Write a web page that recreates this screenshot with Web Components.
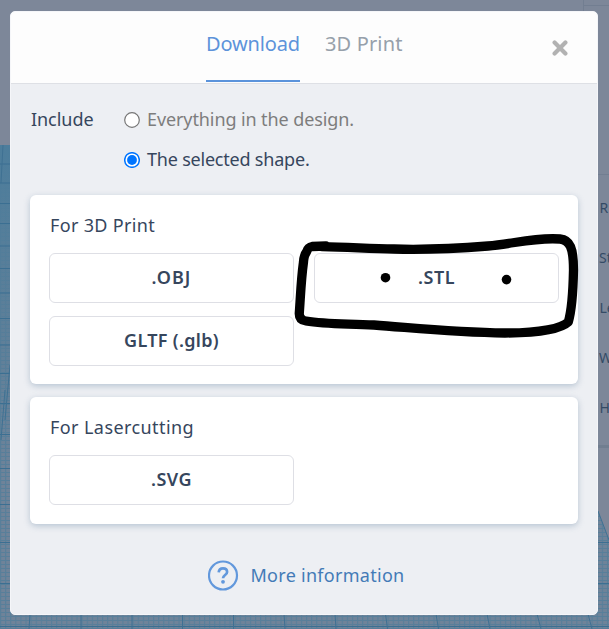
<!DOCTYPE html>
<html lang="en">
<head>
<meta charset="utf-8">
<title>Download</title>
<style>
html,body{margin:0;height:100%;overflow:hidden}
body{font-family:"Noto Sans","Open Sans",sans-serif;font-size:18px;color:#36465d;background:#7d8799}
</style>
</head>
<body>
<design-page></design-page>
<script>
const define = (name, html, setup) => customElements.define(name, class extends HTMLElement {
  connectedCallback() {
    if (this.shadowRoot) return;
    this.attachShadow({mode: 'open'}).innerHTML = html;
    if (setup) setup(this, this.shadowRoot);
  }
});

// A single line of text whose tracking fills the given width.
define('fit-text', `<style>:host{display:inline-block;white-space:nowrap;line-height:24px;padding-bottom:2px}span{display:inline-block}</style><span><slot></slot></span>`,
  (el, root) => {
    const s = root.querySelector('span'), w = +el.getAttribute('width'), n = el.textContent.length;
    s.style.letterSpacing = ((w - s.getBoundingClientRect().width) / n) + 'px';
  });

define('work-plane', `<style>:host{display:block;position:absolute;inset:0}svg{display:block}text{font:14px "Noto Sans",sans-serif;fill:#344b66}</style>
<svg width="609" height="629">
<defs>
<pattern id="fine" width="5.1" height="4" patternUnits="userSpaceOnUse"><rect width="5.1" height="4" fill="#6f8399"/><path d="M0 .5H5.1M.5 0V4" stroke="#587f9a" stroke-width="1.2"/></pattern>
<linearGradient id="far" x1="0" y1="145" x2="0" y2="480" gradientUnits="userSpaceOnUse"><stop stop-color="#4c7d9c"/><stop offset=".5" stop-color="#547d99" stop-opacity=".7"/><stop offset="1" stop-color="#547d99" stop-opacity="0"/></linearGradient>
</defs>
<rect width="609" height="629" fill="#7d8799"/>
<path d="M0 145H500L598 511L609 540V629H0Z" fill="url(#fine)"/>
<path d="M0 145H12V480H0Z" fill="url(#far)"/>
<path d="M0 164H12M0 183H12M0 203.5H12M0 223.5H12M0 246H12M0 268.5H12M0 293H12M0 318.5H12M0 345H12M0 373.5H12M0 403.5H12M0 434.500H12M0 468.500H12M0 504.500H12M0 542.500H12M0 583.500H12M597 542.500H609M597 583.500H609M0 626.500H609" stroke="#3b6f92" fill="none"/>
<path d="M10 365L5 420M5 390L1 440M3 145L1 183M30 614L29 629M81 614V629M132 614V629M182.500 614V629M233.500 614V629M284 614L285 629M335 614L336 629M385.500 614L387.500 629M436 614L438.500 629M487 614L490 629M537 614L541 629M588 614L592 629M598 511L609 540" stroke="#3f7193" fill="none"/>
<path d="M583.500 0V12M583 5.500H609M598 174.500H609" stroke="#727e91" fill="none"/>
<path d="M598 445H609V448H598Z" fill="#717e90"/>
<text x="599.500" y="213">R</text><text x="599" y="263">St</text><text x="599.500" y="313">Le</text><text x="599" y="363">W</text><text x="599.500" y="413">H</text>
</svg>`);

define('tab-item', `<style>:host{display:block;box-sizing:border-box;height:71px;padding-top:19px;font-size:20px;color:#96a0aa}
:host([active]){color:#5d93da;border-bottom:2px solid #5b93db}</style><slot></slot>`);

define('close-icon', `<style>:host{display:block;width:16px;height:16px}svg{display:block}</style>
<svg width="16" height="16"><path d="M2.600 2.600L13.400 13.400M13.400 2.600L2.600 13.400" stroke="#b2b2b2" stroke-width="4.200" stroke-linecap="round"/></svg>`);

define('dialog-head', `<style>:host{display:grid;grid-template-columns:195px 1fr 45.500px;box-sizing:border-box;height:72px;background:#fdfdfd;border-bottom:1px solid #dee0e5}
nav{display:flex;gap:25px;margin-top:-1px}close-icon{margin-top:28px}</style><span></span>
<nav><tab-item active><fit-text width="94">Download</fit-text></tab-item><tab-item><fit-text width="77.500">3D Print</fit-text></tab-item></nav><close-icon></close-icon>`);

define('radio-choice', `<style>:host{display:flex;align-items:center;gap:7px;height:24px;color:#7d7d7d}:host([checked]){color:#36465d}
svg{display:block}circle{fill:#fff;stroke:#767676;stroke-width:1.200}.dot{display:none}
:host([checked]) circle{stroke:#0075ff;stroke-width:1.500}:host([checked]) .dot{display:block;fill:#0075ff;stroke:none}</style>
<svg width="16" height="16"><circle cx="8" cy="8" r="7.300"/><circle class="dot" cx="8" cy="8" r="4.900"/></svg><slot></slot>`);

define('format-button', `<style>:host{display:flex;align-items:center;justify-content:center;box-sizing:border-box;height:50px;border:1px solid #dedfe5;border-radius:6px;background:#fff;font-weight:600}</style><slot></slot>`);

define('format-card', `<style>:host{display:block;box-sizing:border-box;padding:18px 19px;background:#fff;border-radius:6px;box-shadow:0 2px 6px rgba(120,145,172,.46)}
header{padding-left:1px;height:40px}section{display:grid;grid-template-columns:245px 245px;gap:13px 20px}</style>
<header><slot name="title"></slot></header><section><slot></slot></section>`);

define('help-link', `<style>:host{display:flex;align-items:center;justify-content:center;gap:12px;padding-left:4px;color:#437bb7}svg{display:block}</style>
<svg width="31" height="31" fill="none" stroke="#6298dc"><circle cx="15" cy="15.500" r="14" stroke-width="2.200"/><path d="M10.700 12.300C11 9.400 12.800 8.400 15 8.400C17.500 8.400 19.100 9.800 19.100 11.900C19.100 15 15 15 15 18.300" stroke-width="2.700"/><circle cx="15" cy="21.800" r="1.900" fill="#6298dc" stroke="none"/></svg><slot></slot>`);

define('download-dialog', `<style>:host{display:flex;flex-direction:column;box-sizing:border-box;width:588px;height:604px;border:1px solid #f5f6f9;border-radius:5px;background:#edeff3;overflow:hidden}
.include{display:grid;grid-template-columns:93px 1fr;padding:24px 20px 0;height:111px;box-sizing:border-box}
.include>fit-text{margin-top:-1px}.choices{display:flex;flex-direction:column;gap:16px}
.cards{display:flex;flex-direction:column;gap:13px;padding:0 19px}
.tall{height:189px}.short{height:127px}help-link{margin-top:36px}</style>
<dialog-head></dialog-head>
<div class="include"><fit-text width="62.500">Include</fit-text><div class="choices"><radio-choice><fit-text width="207">Everything in the design.</fit-text></radio-choice><radio-choice checked><fit-text width="162.500">The selected shape.</fit-text></radio-choice></div></div>
<div class="cards">
<format-card class="tall"><fit-text slot="title" width="105">For 3D Print</fit-text><format-button><fit-text width="40">.OBJ</fit-text></format-button><format-button><fit-text width="37">.STL</fit-text></format-button><format-button><fit-text width="95">GLTF (.glb)</fit-text></format-button></format-card>
<format-card class="short"><fit-text slot="title" width="144">For Lasercutting</fit-text><format-button><fit-text width="41">.SVG</fit-text></format-button></format-card>
</div>
<help-link><fit-text width="154">More information</fit-text></help-link>`);

// Freehand marker stroke laid over the dialog.
define('marker-ink', `<style>:host{display:block;position:absolute;inset:0;pointer-events:none}svg{display:block}</style>
<svg width="609" height="629"><path d="M326 246L312 246.500Q308 247 306.500 252Q304 255 303.500 262C301 280 300.500 297 299.300 313Q299 320 306 321C326 324.500 347 323.500 374 325C415 328 455 332.500 505 333C541 333 562 328 568.300 322C571.500 311 573 295 573.500 270C573.500 248 570 240 560 239C535 237 513 244 488 246C450 249 425 250 394 249C370 249 350 247 322 246.700" fill="none" stroke="#000" stroke-width="9.300" stroke-linecap="round" stroke-linejoin="round"/><circle cx="385.500" cy="277.700" r="4.800"/><circle cx="506.500" cy="279.600" r="4.800"/></svg>`);

define('design-page', `<style>:host{display:block;position:relative;box-sizing:border-box;width:609px;height:629px;padding:11px 0 0 10px;overflow:hidden}download-dialog{position:relative}</style>
<work-plane></work-plane><download-dialog></download-dialog><marker-ink></marker-ink>`);
</script>
</body>
</html>
